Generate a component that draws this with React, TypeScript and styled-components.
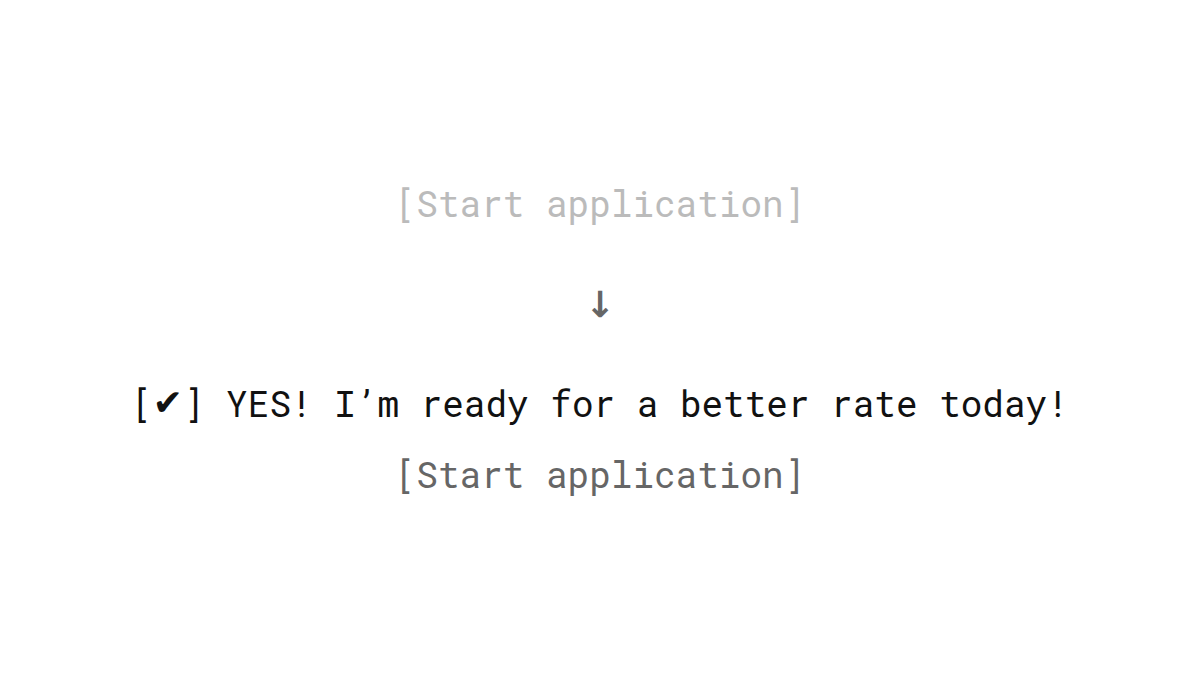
import React from "react";
import styled, { createGlobalStyle } from "styled-components";

const GlobalStyle = createGlobalStyle`
  html, body {
    margin: 0;
    padding: 0;
    background: #ffffff;
  }
`;

const Page = styled.main`
  width: 1200px;
  height: 676px;
  display: flex;
  flex-direction: column;
  align-items: center;
  font-family: "Roboto Mono", "DejaVu Sans Mono", "Liberation Mono", monospace;
  font-size: 36px;
  line-height: 1;
  white-space: pre;
`;

const Line = styled.div<{ $tone: string; $top: number }>`
  margin-top: ${(p) => p.$top}px;
  color: ${(p) => p.$tone};
  height: 40px;
  display: flex;
  align-items: center;
`;

const Arrow = styled.div`
  margin-top: 62px;
  height: 40px;
  display: flex;
  align-items: center;
  color: #666666;
  font-family: "DejaVu Sans", sans-serif;
  font-weight: 700;
`;

const Check = styled.span`
  font-family: "DejaVu Sans", sans-serif;
`;

const App: React.FC = () => {
  return (
    <>
      <GlobalStyle />
      <Page>
        <Line $tone="#bbbbbb" $top={183}>[Start application]</Line>
        <Arrow>↓</Arrow>
        <Line $tone="#111111" $top={58}>
          [<Check>✔</Check>] YES! I’m ready for a better rate today!
        </Line>
        <Line $tone="#666666" $top={31}>[Start application]</Line>
      </Page>
    </>
  );
};

export default App;
